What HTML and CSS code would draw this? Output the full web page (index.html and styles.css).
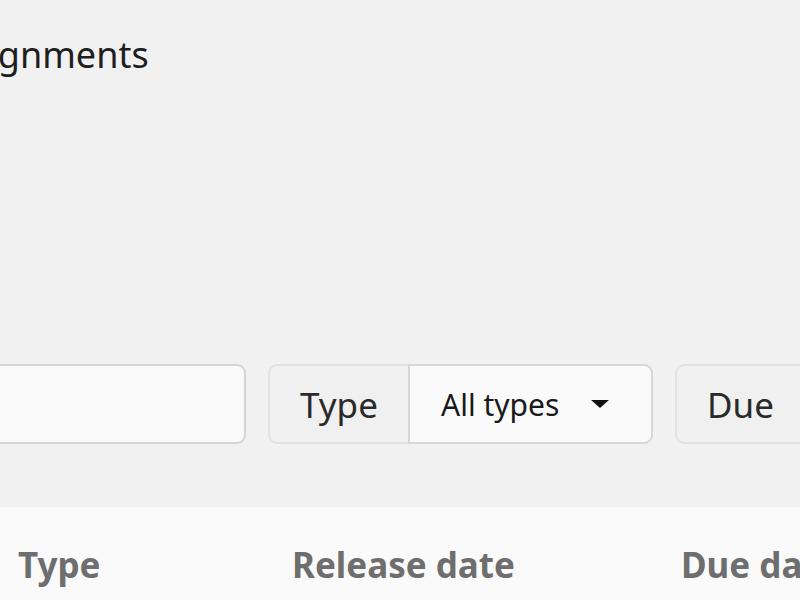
FILE: index.html
```html
<!DOCTYPE html>
<html lang="en">
<head>
<meta charset="utf-8">
<title>Assignments</title>
<link rel="stylesheet" href="styles.css">
</head>
<body>
<div class="page">
  <h1 class="title">Assignments</h1>
  <div class="filters">
    <input class="search" type="text" aria-label="Search">
    <div class="group">
      <span class="group-label">Type</span>
      <div class="select">
        <span>All types</span>
        <svg class="caret" width="18" height="8" viewBox="0 0 18 8"><path d="M0 0H18L9 8Z" fill="#111"/></svg>
      </div>
    </div>
    <div class="group">
      <span class="group-label">Due</span>
      <div class="select">
        <span>Any time</span>
        <svg class="caret" width="18" height="8" viewBox="0 0 18 8"><path d="M0 0H18L9 8Z" fill="#111"/></svg>
      </div>
    </div>
  </div>
</div>
<div class="table">
  <div class="thead">
    <div class="th col-type">Type</div>
    <div class="th col-release">Release date</div>
    <div class="th col-due">Due date</div>
  </div>
</div>
</body>
</html>
```

FILE: styles.css
```css
html, body {
  margin: 0;
  padding: 0;
  background: #f1f1f1;
  font-family: "Noto Sans", "Open Sans", sans-serif;
  color: #222;
  overflow: hidden;
}
.page {
  margin-left: -69px;
}
.title {
  margin: 0;
  padding-top: 30px;
  font-size: 36px;
  font-weight: 400;
  line-height: 50px;
  color: #1e1e1e;
}
.filters {
  display: flex;
  gap: 22px;
  margin-top: 284px;
  height: 80px;
  white-space: nowrap;
}
.search {
  box-sizing: border-box;
  width: 315px;
  flex: none;
  height: 80px;
  margin: 0;
  background: #fafafa;
  border: 2px solid #d4d4d4;
  border-radius: 9px;
  font: inherit;
}
.group {
  display: flex;
  flex: none;
  height: 80px;
}
.group-label {
  box-sizing: border-box;
  width: 140px;
  display: flex;
  align-items: center;
  padding-left: 30px;
  font-size: 35px;
  color: #2a2a2a;
  background: #f0f0f0;
  border: 2px solid #e2e2e2;
  border-right: none;
  border-radius: 9px 0 0 9px;
}
.select {
  box-sizing: border-box;
  width: 245px;
  display: flex;
  align-items: center;
  justify-content: space-between;
  padding: 0 42px 0 31px;
  font-size: 30px;
  color: #1a1a1a;
  background: #fafafa;
  border: 2px solid #d6d6d6;
  border-radius: 0 9px 9px 0;
}
.caret {
  display: block;
}
.table {
  margin-top: 63px;
  background: #fafafa;
  height: 200px;
}
.thead {
  display: flex;
  padding: 36px 0 0 18px;
  white-space: nowrap;
}
.th {
  font-size: 35px;
  font-weight: 700;
  color: #6e6e6e;
  line-height: 44px;
  flex: none;
}
.col-type { width: 274px; }
.col-release { width: 389px; }
.col-due { width: 300px; }
```
